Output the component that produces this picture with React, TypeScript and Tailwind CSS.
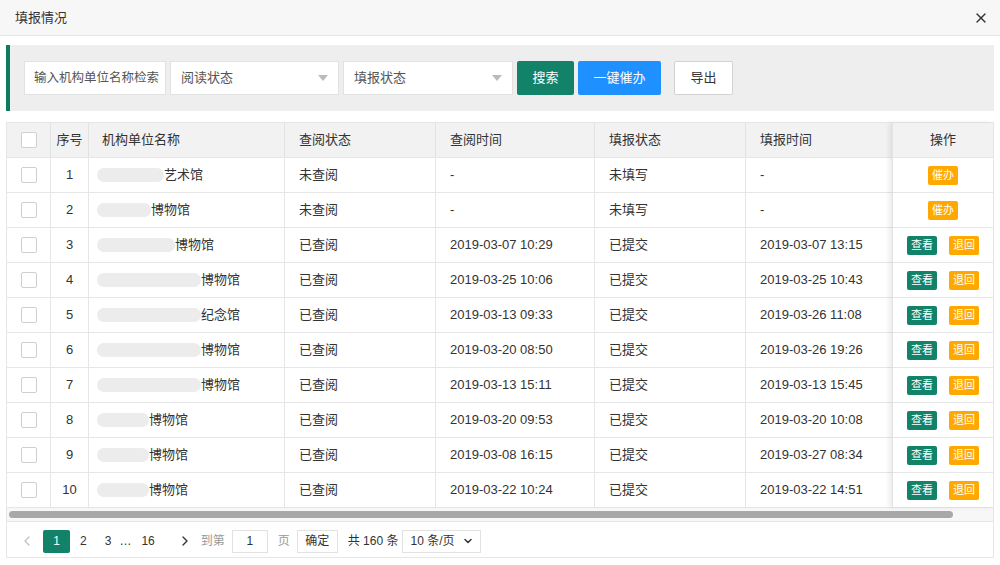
import { ChevronDown, ChevronLeft, ChevronRight, X } from 'lucide-react';

const font = { fontFamily: '"Liberation Sans", "Noto Sans CJK SC", sans-serif' };

const rows = [
  { no: 1, blur: 67, name: '艺术馆', read: '未查阅', readAt: '-', fill: '未填写', fillAt: '-', done: false },
  { no: 2, blur: 54, name: '博物馆', read: '未查阅', readAt: '-', fill: '未填写', fillAt: '-', done: false },
  { no: 3, blur: 78, name: '博物馆', read: '已查阅', readAt: '2019-03-07 10:29', fill: '已提交', fillAt: '2019-03-07 13:15', done: true },
  { no: 4, blur: 104, name: '博物馆', read: '已查阅', readAt: '2019-03-25 10:06', fill: '已提交', fillAt: '2019-03-25 10:43', done: true },
  { no: 5, blur: 104, name: '纪念馆', read: '已查阅', readAt: '2019-03-13 09:33', fill: '已提交', fillAt: '2019-03-26 11:08', done: true },
  { no: 6, blur: 104, name: '博物馆', read: '已查阅', readAt: '2019-03-20 08:50', fill: '已提交', fillAt: '2019-03-26 19:26', done: true },
  { no: 7, blur: 104, name: '博物馆', read: '已查阅', readAt: '2019-03-13 15:11', fill: '已提交', fillAt: '2019-03-13 15:45', done: true },
  { no: 8, blur: 52, name: '博物馆', read: '已查阅', readAt: '2019-03-20 09:53', fill: '已提交', fillAt: '2019-03-20 10:08', done: true },
  { no: 9, blur: 52, name: '博物馆', read: '已查阅', readAt: '2019-03-08 16:15', fill: '已提交', fillAt: '2019-03-27 08:34', done: true },
  { no: 10, blur: 52, name: '博物馆', read: '已查阅', readAt: '2019-03-22 10:24', fill: '已提交', fillAt: '2019-03-22 14:51', done: true },
];

const Box = () => <span className="block h-4 w-4 rounded-[2px] border border-[#cfcfcf] bg-white" />;

function Select({ label, w }: { label: string; w: string }) {
  return (
    <div className={`flex h-[34px] ${w} items-center justify-between border border-[#e2e2e2] bg-white pl-[10px] pr-[10px] text-[13px] text-[#555]`}>
      <span>{label}</span>
      <span className="h-0 w-0 border-x-[5px] border-t-[6px] border-x-transparent border-t-[#bbb]" />
    </div>
  );
}

export default function App() {
  return (
    <div className="h-[565px] w-[1000px] overflow-hidden bg-white text-[#333]" style={font}>
      <div className="flex h-[36px] items-center justify-between border-b border-[#e6e6e6] bg-[#f7f7f7] pl-[15px] pr-[11px]">
        <span className="text-[13px] text-[#333]">填报情况</span>
        <X size={16} strokeWidth={2} className="text-[#333]" />
      </div>

      <div className="mx-[6px] mt-[9px] flex h-[66px] items-center gap-[4px] border-l-4 border-[#0e7a60] bg-[#eeeeee] pl-[14px]">
        <div className="flex h-[34px] w-[142px] items-center border border-[#e2e2e2] bg-white pl-[9px] text-[12.5px] text-[#555]">输入机构单位名称检索</div>
        <Select label="阅读状态" w="w-[169px]" />
        <Select label="填报状态" w="w-[170px]" />
        <button className="h-[34px] w-[57px] rounded-[2px] bg-[#128268] text-[13px] text-white">搜索</button>
        <button className="h-[34px] w-[83px] rounded-[2px] bg-[#1e90ff] text-[13px] text-white">一键催办</button>
        <button className="ml-[9px] h-[34px] w-[59px] rounded-[2px] border border-[#d2d2d2] bg-white text-[13px] text-[#333]">导出</button>
      </div>

      <div className="mx-[6px] mt-[11px] border border-[#e6e6e6]">
        <div className="flex">
          <div className="flex-1">
            <div className="flex h-[34px] items-center bg-[#f2f2f2] text-[13px] text-[#333]">
              <div className="flex h-full w-[44px] items-center justify-center border-r border-[#e2e2e2]"><Box /></div>
              <div className="flex h-full w-[38px] items-center justify-center border-r border-[#e2e2e2]">序号</div>
              <div className="flex h-full w-[196px] items-center border-r border-[#e2e2e2] pl-[13px]">机构单位名称</div>
              <div className="flex h-full w-[151px] items-center border-r border-[#e2e2e2] pl-[14px]">查阅状态</div>
              <div className="flex h-full w-[159px] items-center border-r border-[#e2e2e2] pl-[14px]">查阅时间</div>
              <div className="flex h-full w-[151px] items-center border-r border-[#e2e2e2] pl-[14px]">填报状态</div>
              <div className="flex h-full flex-1 items-center pl-[14px]">填报时间</div>
            </div>
            {rows.map((r) => (
              <div key={r.no} className="flex h-[35px] items-center border-t border-[#e6e6e6] text-[13px] text-[#333]">
                <div className="flex h-full w-[44px] items-center justify-center border-r border-[#e6e6e6]"><Box /></div>
                <div className="flex h-full w-[38px] items-center justify-center border-r border-[#e6e6e6]">{r.no}</div>
                <div className="flex h-full w-[196px] items-center border-r border-[#e6e6e6] pl-[8px]">
                  <span className="h-[14px] rounded-full bg-[#ececec]" style={{ width: r.blur }} />
                  <span>{r.name}</span>
                </div>
                <div className="flex h-full w-[151px] items-center border-r border-[#e6e6e6] pl-[14px]">{r.read}</div>
                <div className="flex h-full w-[159px] items-center border-r border-[#e6e6e6] pl-[14px]">{r.readAt}</div>
                <div className="flex h-full w-[151px] items-center border-r border-[#e6e6e6] pl-[14px]">{r.fill}</div>
                <div className="flex h-full flex-1 items-center pl-[14px]">{r.fillAt}</div>
              </div>
            ))}
          </div>
          <div className="relative w-[101px] border-l border-[#e2e2e2] shadow-[-3px_0_5px_rgba(0,0,0,0.08)]">
            <div className="flex h-[34px] items-center justify-center bg-[#f2f2f2] text-[13px]">操作</div>
            {rows.map((r) => (
              <div key={r.no} className="flex h-[35px] items-center justify-center gap-[12px] border-t border-[#e6e6e6] bg-white text-[11px] text-white">
                {r.done ? (
                  <>
                    <span className="rounded-[2px] bg-[#128268] px-[4px] leading-[19px]">查看</span>
                    <span className="rounded-[2px] bg-[#ffa800] px-[4px] leading-[19px]">退回</span>
                  </>
                ) : (
                  <span className="rounded-[2px] bg-[#ffa800] px-[4px] leading-[19px]">催办</span>
                )}
              </div>
            ))}
          </div>
        </div>
        <div className="flex h-[14px] items-center border-t border-[#e6e6e6] bg-[#f7f7f7] pl-[2px]">
          <span className="h-[7px] w-[944px] rounded-full bg-[#a8a8a8]" />
        </div>
        <div className="flex h-[36px] items-center border-t border-[#e6e6e6] pl-[12px] pt-[3px] text-[12px] text-[#333]">
          <ChevronLeft size={16} className="text-[#c2c2c2]" />
          <span className="ml-[8px] flex h-[23px] w-[27px] items-center justify-center rounded-[2px] bg-[#128268] text-white">1</span>
          <span className="ml-[10px]">2</span>
          <span className="ml-[18px]">3</span>
          <span className="ml-[8px]">…</span>
          <span className="ml-[10px]">16</span>
          <ChevronRight size={16} className="ml-[22px] text-[#333]" />
          <span className="ml-[8px] text-[#999]">到第</span>
          <span className="ml-[7px] flex h-[23px] w-[36px] items-center justify-center border border-[#e2e2e2]">1</span>
          <span className="ml-[10px] text-[#999]">页</span>
          <span className="ml-[7px] flex h-[23px] w-[41px] items-center justify-center border border-[#e2e2e2] text-[#333]">确定</span>
          <span className="ml-[10px]">共 160 条</span>
          <span className="ml-[4px] flex h-[23px] w-[79px] items-center justify-between border border-[#e2e2e2] pl-[7px] pr-[6px]">
            10 条/页
            <ChevronDown size={12} strokeWidth={3} />
          </span>
        </div>
      </div>
    </div>
  );
}
